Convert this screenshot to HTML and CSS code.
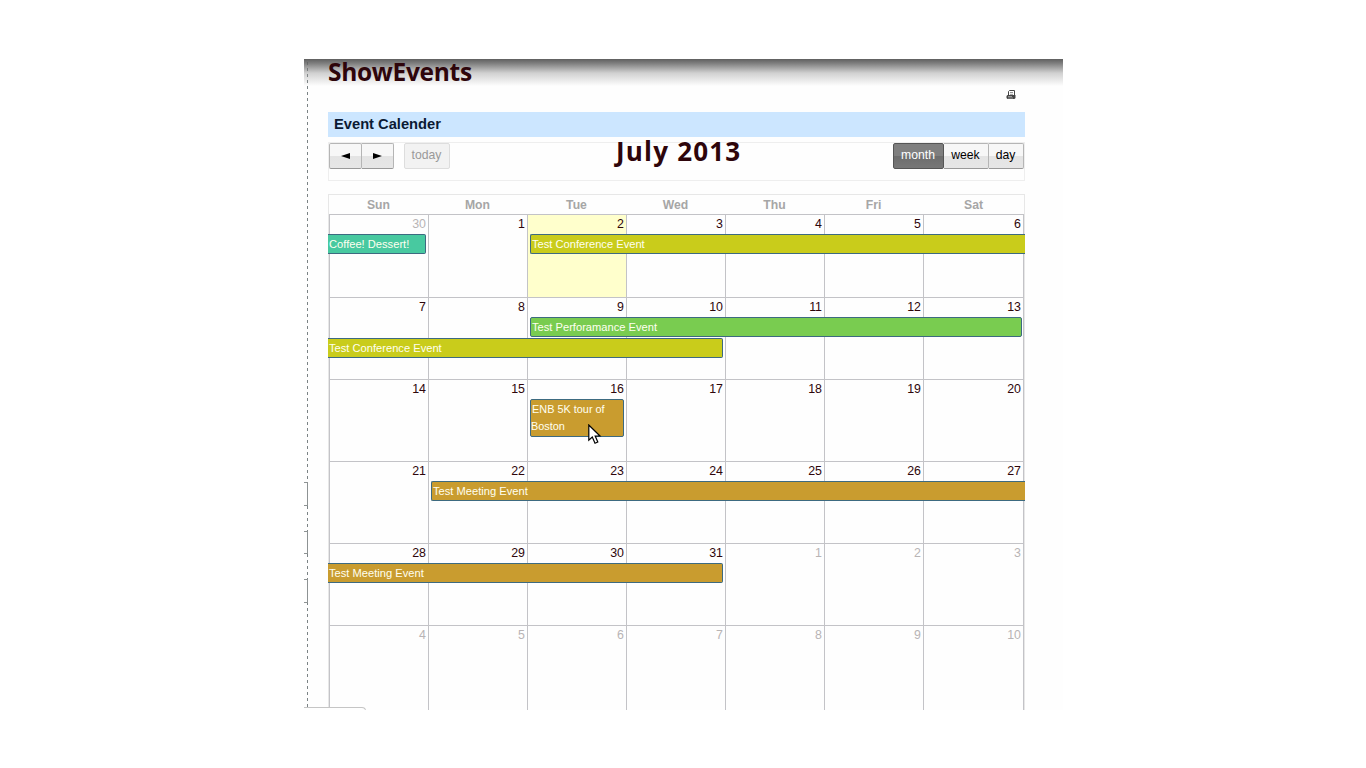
FILE: index.html
```html
<!DOCTYPE html>
<html lang="en">
<head>
<meta charset="utf-8">
<title>ShowEvents</title>
<link rel="stylesheet" href="styles.css">
</head>
<body>
<main class="page">
  <aside class="rail"><i class="tab"></i><i class="tab"></i><i class="tab"></i></aside>
  <div class="content">
    <header class="page-head">
      <h1 class="title">ShowEvents</h1>
      <svg class="printer" width="10" height="10" viewBox="0 0 10 10"><path d="M2.5 5V1.5L3.5.5H8.5V5" fill="#fff" stroke="#444"/><path d="M4 2.5H7M4 4.3H7" stroke="#777" stroke-width=".8"/><path d="M1.5 5H9.5V8L8.5 9H1.5L.5 8V6Z" fill="#444"/><path d="M2 6.5H6M2 8H7" stroke="#bbb" stroke-width=".7"/></svg>
    </header>
    <h2 class="section">Event Calender</h2>
    <div class="toolbar">
      <div class="group"><button class="btn arrow"><svg width="9" height="6" viewBox="0 0 9 6"><path d="M0 3L9 0V6Z"/></svg></button><button class="btn arrow"><svg width="9" height="6" viewBox="0 0 9 6"><path d="M9 3L0 0V6Z"/></svg></button></div>
      <button class="btn today">today</button>
      <h2 class="month-name">July 2013</h2>
      <div class="group views"><button class="btn month active">month</button><button class="btn week-btn">week</button><button class="btn day-btn">day</button></div>
    </div>
    <section class="calendar">
      <div class="days names"><b>Sun</b><b>Mon</b><b>Tue</b><b>Wed</b><b>Thu</b><b>Fri</b><b>Sat</b></div>
      <div class="week first">
        <div class="days cells"><div class="other">30</div><div>1</div><div class="current">2</div><div>3</div><div>4</div><div>5</div><div>6</div></div>
        <div class="days events"><div class="event coffee from-prev c1-1">Coffee! Dessert!</div><div class="event conference to-next c3-7">Test Conference Event</div></div>
      </div>
      <div class="week">
        <div class="days cells"><div>7</div><div>8</div><div>9</div><div>10</div><div>11</div><div>12</div><div>13</div></div>
        <div class="days events"><div class="event performance to-edge c3-7">Test Perforamance Event</div><div class="event conference from-prev c1-4 second">Test Conference Event</div></div>
      </div>
      <div class="week">
        <div class="days cells"><div>14</div><div>15</div><div>16</div><div>17</div><div>18</div><div>19</div><div>20</div></div>
        <div class="days events"><div class="event meeting tall c3-3"><span class="nudge">ENB 5K tour of</span><br>Boston</div></div>
      </div>
      <div class="week">
        <div class="days cells"><div>21</div><div>22</div><div>23</div><div>24</div><div>25</div><div>26</div><div>27</div></div>
        <div class="days events"><div class="event meeting to-next c2-7">Test Meeting Event</div></div>
      </div>
      <div class="week">
        <div class="days cells"><div>28</div><div>29</div><div>30</div><div>31</div><div class="other">1</div><div class="other">2</div><div class="other">3</div></div>
        <div class="days events"><div class="event meeting from-prev c1-4">Test Meeting Event</div></div>
      </div>
      <div class="week last">
        <div class="days cells"><div class="other">4</div><div class="other">5</div><div class="other">6</div><div class="other">7</div><div class="other">8</div><div class="other">9</div><div class="other">10</div></div>
      </div>
    </section>
  </div>
  <div class="shade"></div>
  <div class="status"></div>
  <svg class="cursor" width="14" height="21" viewBox="0 0 14 21"><path d="M.8 1V16.2L4.3 13L7 19.2L9.8 18L7.2 12H12Z" fill="#fff" stroke="#000" stroke-width="1.2"/></svg>
</main>
</body>
</html>
```
FILE: styles.css
```css
* { box-sizing: border-box; }
body { margin: 0; background: #fff; font-family: "Liberation Sans", Arial, sans-serif; color: #2e060b; }
h1, h2 { margin: 0; }
.page { position: relative; width: 759px; height: 651px; margin: 59px 0 0 304px; display: flex; overflow: hidden; background: #fefefe; }
.rail { width: 4px; flex: none; padding-top: 423px; display: flex; flex-direction: column; gap: 25px; background: repeating-linear-gradient(to bottom, transparent 0 3px, #7b8385 3px 6px) right / 1px 100% no-repeat; }
.tab { height: 23.5px; border: 1px solid #8d9293; border-left: 0; background: #fefefe; }
.content { width: 697px; margin-left: 20px; flex: none; }
.page-head { height: 53px; display: flex; align-items: flex-start; justify-content: space-between; position: relative; z-index: 2; }
.title, .month-name { font-family: "Trebuchet MS", "Open Sans", sans-serif; font-weight: 700; line-height: 28px; color: #2e050b; white-space: nowrap; }
.title { font-size: 24.5px; line-height: 28px; letter-spacing: -.3px; margin-top: -1px; }
.printer { margin: 31px 9px 0 0; }
.section { height: 25px; padding-left: 6px; background: #cce6ff; color: #0b1a33; font-size: 14.7px; line-height: 24px; }
.toolbar { height: 39px; margin-top: 5px; border: 1px solid #eee; display: flex; align-items: flex-start; position: relative; }
.group { display: flex; }
.btn { height: 26px; padding: 0 1px 2px 0; border: 1px solid #b5b5b5; border-bottom-color: #999; border-radius: 2px; background: linear-gradient(#f7f7f7 0 48%, #e4e4e4 52%, #e6e6e6); font: 12.2px/22px "Liberation Sans", Arial, sans-serif; color: #000; }
.group .btn + .btn { border-left: 0; border-radius: 0 2px 2px 0; }
.arrow { width: 33px; padding-bottom: 0; display: flex; align-items: center; justify-content: center; }
.arrow + .arrow { width: 32px; }
.today { width: 46px; margin-left: 10px; color: #999; border-color: #ddd; background: #f2f2f2; }
.month-name { position: absolute; left: 287px; top: -6px; font-size: 26px; letter-spacing: 1.2px; }
.views { margin-left: auto; }
.month { width: 51px; }
.week-btn { width: 45px; }
.day-btn { width: 35px; }
.btn.active { color: #fff; border-color: #555; background: linear-gradient(#7f7f7f 0 48%, #6d6d6d 52%, #777); }
.calendar { margin-top: 13px; border: 1px solid #e7e7e7; border-bottom: 0; }
.days { display: grid; grid-template-columns: repeat(6, 99px) 101px; }
.names { height: 19px; font-size: 12.2px; line-height: 20px; color: #a6a6a6; text-align: center; }
.week { height: 82px; position: relative; }
.first { height: 83px; }
.last { height: 86px; }
.cells { height: 100%; font-size: 12.4px; line-height: 19px; text-align: right; }
.cells > div { border-left: 1px solid #c3c3c7; border-top: 1px solid #c3c3c7; padding-right: 2px; }
.cells > div:last-child { margin-right: 5px; margin-right: 0; border-right: 1px solid #c3c3c7; }
.cells .other { color: #b8b4b5; }
.cells .current { background: #ffffcc; }
.events { position: absolute; inset: 20px -1px auto; grid-template-columns: 100px repeat(5, 99px) 102px; row-gap: 1px; }
.event { height: 20px; margin: 0 2px 0 3px; padding-left: 1px; border: 1px solid #3d6a80; border-radius: 2px; font-size: 11.15px; line-height: 18px; color: #fffff0; white-space: nowrap; }
.from-prev { margin-left: 0; border-left: 0; border-radius: 0 2px 2px 0; }
.to-next { margin-right: 0; border-right: 0; border-radius: 2px 0 0 2px; }
.to-edge { margin-right: 3px; }
.tall { height: 38px; line-height: 17px; padding: 1px 0 0; font-size: 10.9px; }
.nudge { padding-left: 1px; }
.coffee { background: #48c9a0; }
.conference { background: #c9cc1b; }
.performance { background: #79cc50; }
.meeting { background: #c99c2f; }
.c1-1 { grid-area: 1 / 1 / 2 / 2; }
.c3-7 { grid-area: 1 / 3 / 2 / 8; }
.c1-4 { grid-area: 1 / 1 / 2 / 5; }
.c3-3 { grid-area: 1 / 3 / 2 / 4; }
.c2-7 { grid-area: 1 / 2 / 2 / 8; }
.second { grid-row: 2 / 3; }
.shade { position: absolute; inset: 0 0 auto; height: 27px; background: linear-gradient(rgba(85,85,85,.94), rgba(100,100,100,.8) 18%, rgba(140,140,140,.4) 52%, rgba(255,255,255,0)); }
.status { position: absolute; left: -2px; bottom: -1px; width: 64px; height: 4px; border: 1px solid #c5c5c5; border-radius: 0 4px 0 0; background: #fefefe; }
.cursor { position: absolute; left: 284px; top: 365px; }
```
